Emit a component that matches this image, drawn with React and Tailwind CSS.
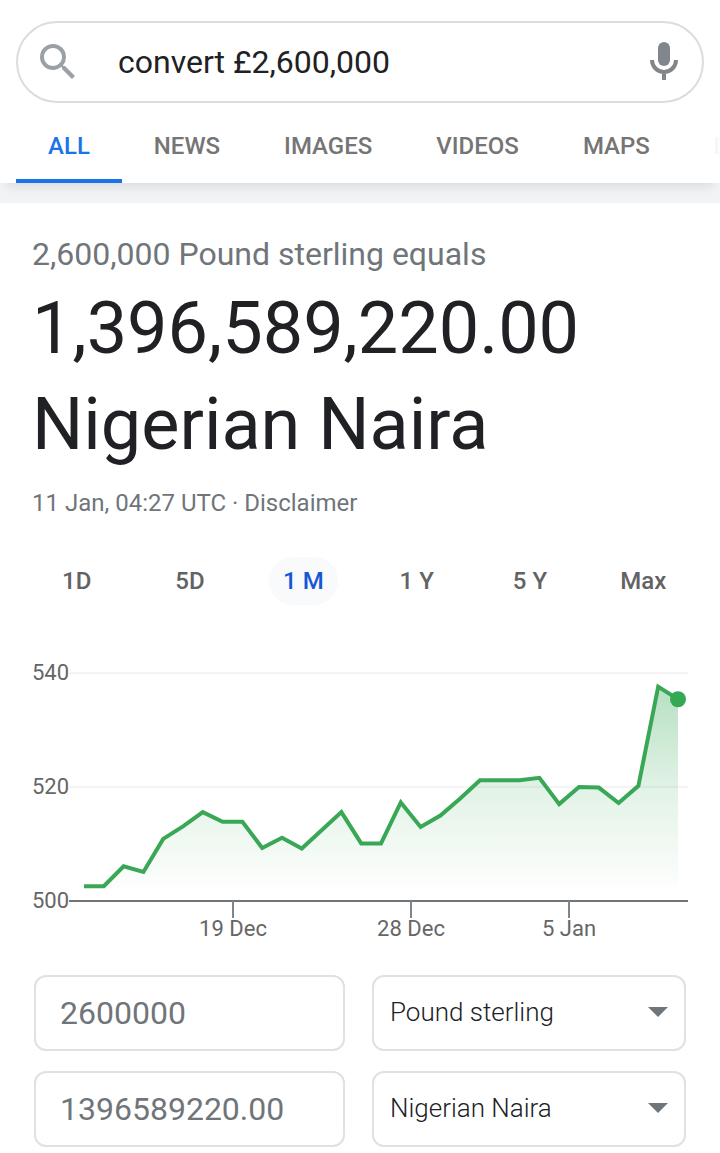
import React, { useState } from "react";
import { MdSearch } from "react-icons/md";

const TABS = ["ALL", "NEWS", "IMAGES", "VIDEOS", "MAPS", "BOOKS"];
const PERIODS = ["1D", "5D", "1 M", "1 Y", "5 Y", "Max"];
const CURRENCIES = ["Pound sterling", "Nigerian Naira"];

// one rate per day, GBP -> NGN
const RATES = [
  502.6, 502.6, 506.1, 505.1, 510.9, 513.1, 515.6, 513.9, 513.9, 509.3, 511.1,
  509.2, 512.4, 515.6, 510.1, 510.1, 517.3, 513, 515, 518, 521.2, 521.2, 521.2,
  521.6, 517, 520, 519.9, 517.2, 520.2, 537.6, 535.4,
];

const DATES = [
  { x: 233, label: "19 Dec" },
  { x: 411, label: "28 Dec" },
  { x: 569, label: "5 Jan" },
];

const BASE = 251;
const toX = (i) => 84 + i * 19.8;
const toY = (rate) => BASE - (rate - 500) * 5.7;

function MicIcon() {
  return (
    <svg viewBox="0 0 24 24" className="size-12 text-[#80868b]" aria-hidden="true">
      <rect x="9" y="2" width="6" height="12" rx="3" fill="currentColor" />
      <path d="M6 11a6 6 0 0 0 12 0M12 17v4" fill="none" stroke="currentColor" strokeWidth="2" />
    </svg>
  );
}

function RateChart() {
  const points = RATES.map((rate, i) => `${toX(i)},${toY(rate)}`).join(" ");
  const lastX = toX(RATES.length - 1);
  const lastY = toY(RATES[RATES.length - 1]);

  return (
    <svg viewBox="0 0 720 310" className="block w-full" role="img" aria-label="Exchange rate, last month">
      <defs>
        <linearGradient id="area" gradientUnits="userSpaceOnUse" x1="0" y1="36" x2="0" y2="245">
          <stop offset="0" stopColor="#34a853" stopOpacity="0.36" />
          <stop offset="0.5" stopColor="#34a853" stopOpacity="0.14" />
          <stop offset="1" stopColor="#34a853" stopOpacity="0" />
        </linearGradient>
      </defs>

      {/* Grid */}
      <path d="M69 23H688M69 137H688" stroke="#f4f4f4" strokeWidth="2" />

      {/* Area and line */}
      <polygon points={`84,${BASE} ${points} ${lastX},${BASE}`} fill="url(#area)" />
      <polyline points={points} fill="none" stroke="#3aa757" strokeWidth="4" />
      <circle cx={lastX} cy={lastY} r="8" fill="#34a853" />

      {/* Axes */}
      <path d={`M69 ${BASE}H688`} stroke="#70757a" strokeWidth="2" />
      {[540, 520, 500].map((rate) => (
        <text key={rate} x="69" y={toY(rate) + 7} textAnchor="end" className="fill-[#666666] text-[22px]">
          {rate}
        </text>
      ))}
      {DATES.map(({ x, label }) => (
        <g key={label}>
          <path d={`M${x} ${BASE}V268`} stroke="#80858a" strokeWidth="2" />
          <text x={x} y="286" textAnchor="middle" className="fill-[#666666] text-[22px]">
            {label}
          </text>
        </g>
      ))}
    </svg>
  );
}

function AmountInput({ label, value, onChange }) {
  return (
    <input
      type="text"
      inputMode="decimal"
      aria-label={label}
      value={value}
      onChange={(e) => onChange(e.target.value)}
      className="h-[76px] w-full min-w-0 rounded-xl border-2 border-[#dfe1e5] px-6 text-[32px] text-[#70757a] outline-none"
    />
  );
}

function CurrencySelect({ label, value, onChange }) {
  return (
    <div className="relative">
      <select
        aria-label={label}
        value={value}
        onChange={(e) => onChange(e.target.value)}
        className="h-[76px] w-full appearance-none rounded-xl border-2 border-[#dfe1e5] bg-white pr-14 pb-[2px] pl-4 text-[26px] font-light text-[#202124] outline-none"
      >
        {CURRENCIES.map((name) => (
          <option key={name}>{name}</option>
        ))}
      </select>
      <svg
        viewBox="0 0 20 10"
        className="pointer-events-none absolute top-8 right-[18px] h-[10px] w-5"
        aria-hidden="true"
      >
        <path d="M0 0h20L10 10z" fill="#70757a" />
      </svg>
    </div>
  );
}

export default function App() {
  const [query, setQuery] = useState("convert £2,600,000");
  const [period, setPeriod] = useState("1 M");
  const [amount, setAmount] = useState("2600000");
  const [result, setResult] = useState("1396589220.00");
  const [from, setFrom] = useState("Pound sterling");
  const [to, setTo] = useState("Nigerian Naira");

  return (
    <div className="bg-white font-[Roboto,sans-serif] text-[#202124]">
      {/* Header */}
      <header className="relative bg-white pt-[21px] shadow-[0_8px_12px_-6px_rgba(0,0,0,0.12)]">
        <form
          onSubmit={(e) => e.preventDefault()}
          className="mx-4 flex h-[82px] items-center rounded-full border-2 border-[#dadce0] pr-[14px] pl-4"
        >
          <button type="submit" aria-label="Search" className="text-[#9aa0a6]">
            <MdSearch size={48} />
          </button>
          <input
            type="text"
            aria-label="Search query"
            value={query}
            onChange={(e) => setQuery(e.target.value)}
            className="ml-9 min-w-0 flex-1 text-[32px] outline-none"
          />
          <button type="button" aria-label="Voice search">
            <MicIcon />
          </button>
        </form>

        <nav className="relative ml-4 flex overflow-hidden">
          {TABS.map((tab) => (
            <a
              key={tab}
              href="#"
              className={`flex h-20 shrink-0 items-center border-b-4 px-8 pt-[10px] text-2xl font-medium ${
                tab === "ALL" ? "border-[#1a73e8] text-[#1a73e8]" : "border-transparent text-[#757575]"
              }`}
            >
              {tab}
            </a>
          ))}
          <div className="pointer-events-none absolute inset-y-0 right-0 w-12 bg-linear-to-r from-white/0 to-white" />
        </nav>
      </header>
      <div className="h-5 bg-[#f1f3f4]" />

      <main className="pt-[31px] pb-[6px]">
        {/* Conversion */}
        <section className="px-8">
          <p className="text-[32px] leading-10 text-[#70757a]">2,600,000 Pound sterling equals</p>
          <h1 className="mt-[7px] text-[72px] leading-[96px]">
            1,396,589,220.00
            <br />
            Nigerian Naira
          </h1>
          <p className="mt-[14px] text-2xl text-[#70757a]">
            11 Jan, 04:27 UTC · <a href="#">Disclaimer</a>
          </p>
        </section>

        {/* Period picker */}
        <div className="mx-5 mt-[38px] grid grid-cols-6 justify-items-center">
          {PERIODS.map((item) => (
            <button
              key={item}
              type="button"
              onClick={() => setPeriod(item)}
              className={`h-12 rounded-full px-[14px] text-2xl font-medium whitespace-nowrap ${
                item === period ? "bg-[#f8fafc] text-[#1558d6]" : "text-[#636363]"
              }`}
            >
              {item}
            </button>
          ))}
        </div>

        <div className="mt-[45px]">
          <RateChart />
        </div>

        {/* Converter */}
        <div className="mx-[34px] mt-[15px] grid grid-cols-[311fr_314fr] gap-x-[27px] gap-y-5">
          <AmountInput label="Amount" value={amount} onChange={setAmount} />
          <CurrencySelect label="From currency" value={from} onChange={setFrom} />
          <AmountInput label="Converted amount" value={result} onChange={setResult} />
          <CurrencySelect label="To currency" value={to} onChange={setTo} />
        </div>
      </main>
    </div>
  );
}
